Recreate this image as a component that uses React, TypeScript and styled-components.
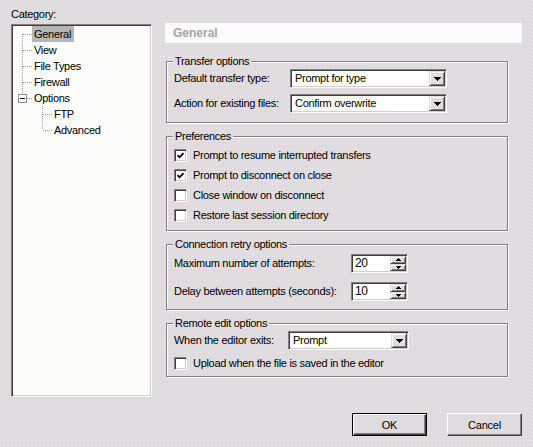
import React from 'react';
import styled, { createGlobalStyle, css } from 'styled-components';

const FACE = '#dfdbdf';
const DOT = '#ebe8eb';

const pattern = css`
  background-color: ${FACE};
  background-image: conic-gradient(at 1px 1px, transparent 75%, ${DOT} 0);
  background-size: 4px 4px;
  background-attachment: fixed;
`;

const GlobalStyle = createGlobalStyle`
  html, body { margin: 0; padding: 0; }
  body {
    ${pattern}
    font-family: "Liberation Sans", Arial, sans-serif;
    font-size: 11px;
    color: #000;
  }
`;

const sunken = css`
  border: 1px solid;
  border-color: #808080 #ffffff #ffffff #808080;
  box-shadow: inset 1px 1px 0 #404040, inset -1px -1px 0 #d4d0c8;
`;

const raised = css`
  border: 1px solid;
  border-color: ${FACE} #404040 #404040 ${FACE};
  box-shadow: inset 1px 1px 0 #ffffff, inset -1px -1px 0 #808080;
  background: ${FACE};
`;

const Dialog = styled.div`
  width: 533px;
  height: 447px;
  box-sizing: border-box;
  padding: 8px 11px 0 11px;
  display: grid;
  grid-template-columns: 141px 1fr;
  grid-template-rows: 389px auto;
  column-gap: 13px;
  letter-spacing: -0.3px;
`;

const LeftColumn = styled.div`
  display: flex;
  flex-direction: column;
  gap: 3px;
`;

const CategoryLabel = styled.div`
  line-height: 13px;
`;

const TreeBox = styled.div`
  ${sunken}
  flex: 1;
  background: #fcfcfa;
  padding: 1px 0 0 1px;
`;

const TreeRow = styled.div`
  display: flex;
  align-items: center;
  height: 16px;
`;

const TreeIndent = styled.span`
  width: 20px;
  flex: none;
`;

const TreeLabel = styled.span<{ $selected?: boolean }>`
  height: 16px;
  line-height: 16px;
  padding: 0 3px 0 2px;
  background: ${(p) => (p.$selected ? '#b6b6b6' : 'transparent')};
`;

type GuideKind = 'first' | 'middle' | 'last';

const TreeGuide: React.FC<{ kind: GuideKind; box?: boolean }> = ({ kind, box }) => {
  const y1 = kind === 'first' ? 8 : 0;
  const y2 = kind === 'last' ? 8 : 16;
  return (
    <svg width="19" height="16" viewBox="0 0 19 16" shapeRendering="crispEdges" style={{ flex: 'none' }}>
      {box ? (
        <>
          <line x1="9.5" y1="0" x2="9.5" y2="4" stroke="#a0a0a0" strokeDasharray="1 1" />
          <line x1="14" y1="8.5" x2="19" y2="8.5" stroke="#a0a0a0" strokeDasharray="1 1" />
          <rect x="5.5" y="4.5" width="8" height="8" fill="#fff" stroke="#909090" />
          <line x1="7" y1="8.5" x2="12" y2="8.5" stroke="#000" />
        </>
      ) : (
        <>
          <line x1="9.5" y1={y1} x2="9.5" y2={y2} stroke="#a0a0a0" strokeDasharray="1 1" />
          <line x1="10" y1="8.5" x2="19" y2="8.5" stroke="#a0a0a0" strokeDasharray="1 1" />
        </>
      )}
    </svg>
  );
};

const RightColumn = styled.div`
  margin-top: 15px;
  display: flex;
  flex-direction: column;
`;

const PageHeader = styled.div`
  height: 20px;
  line-height: 20px;
  background: #fbfbfb;
  color: #a6a6a6;
  font-weight: bold;
  font-size: 12px;
  letter-spacing: 0;
  padding-left: 8px;
  margin-bottom: 12px;
`;

const Group = styled.fieldset<{ $pad: string }>`
  margin: 0 14px 7px 1px;
  min-inline-size: 0;
  border: 1px solid #808080;
  box-shadow: inset 1px 1px 0 #fff, 1px 1px 0 #fff;
  padding: ${(p) => p.$pad};
`;

const GroupTitle = styled.legend`
  ${pattern}
  line-height: 13px;
  padding: 0 2px 0 2px;
  margin-left: -1px;
`;

const FormGrid = styled.div<{ $label: number; $gap: number }>`
  display: grid;
  grid-template-columns: ${(p) => p.$label}px auto;
  justify-content: start;
  align-items: center;
  row-gap: ${(p) => p.$gap}px;
`;

const FieldLabel = styled.span`
  line-height: 13px;
  white-space: nowrap;
`;

const SelectBox = styled.div<{ $width: number }>`
  ${sunken}
  width: ${(p) => p.$width}px;
  height: 19px;
  box-sizing: border-box;
  background: #fff;
  padding: 1px;
  display: flex;
`;

const SelectValue = styled.span`
  flex: 1;
  line-height: 15px;
  padding-left: 3px;
  white-space: nowrap;
`;

const ArrowButton = styled.span`
  ${raised}
  width: 16px;
  box-sizing: border-box;
  display: flex;
  align-items: center;
  justify-content: center;
`;

const Select: React.FC<{ value: string; width: number }> = ({ value, width }) => (
  <SelectBox $width={width}>
    <SelectValue>{value}</SelectValue>
    <ArrowButton>
      <svg width="7" height="4" viewBox="0 0 7 4" shapeRendering="crispEdges">
        <path d="M0 0H7L3.5 4Z" fill="#000" />
      </svg>
    </ArrowButton>
  </SelectBox>
);

const SpinBox = styled.div`
  ${sunken}
  width: 57px;
  height: 19px;
  box-sizing: border-box;
  background: #fff;
  padding: 1px;
  display: flex;
`;

const SpinValue = styled.span`
  flex: 1;
  line-height: 15px;
  padding-left: 2px;
  font-size: 12px;
`;

const SpinButtons = styled.span`
  width: 16px;
  display: flex;
  flex-direction: column;
`;

const SpinButton = styled.span`
  ${raised}
  flex: 1;
  box-sizing: border-box;
  display: flex;
  align-items: center;
  justify-content: center;
`;

const Spinner: React.FC<{ value: string }> = ({ value }) => (
  <SpinBox>
    <SpinValue>{value}</SpinValue>
    <SpinButtons>
      <SpinButton>
        <svg width="5" height="3" viewBox="0 0 5 3" shapeRendering="crispEdges">
          <path d="M2.5 0L5 3H0Z" fill="#000" />
        </svg>
      </SpinButton>
      <SpinButton>
        <svg width="5" height="3" viewBox="0 0 5 3" shapeRendering="crispEdges">
          <path d="M0 0H5L2.5 3Z" fill="#000" />
        </svg>
      </SpinButton>
    </SpinButtons>
  </SpinBox>
);

const CheckRow = styled.label`
  display: flex;
  align-items: center;
  gap: 6px;
  height: 20px;
`;

const CheckBoxFrame = styled.span`
  ${sunken}
  width: 13px;
  height: 13px;
  box-sizing: border-box;
  background: #fff;
  display: flex;
  align-items: center;
  justify-content: center;
`;

const Check: React.FC<{ checked?: boolean; label: string }> = ({ checked, label }) => (
  <CheckRow>
    <CheckBoxFrame>
      {checked && (
        <svg width="7" height="7" viewBox="0 0 7 7">
          <path d="M0.5 3.2L2.6 5.3L6.5 1.2" fill="none" stroke="#000" strokeWidth="1.8" />
        </svg>
      )}
    </CheckBoxFrame>
    <span>{label}</span>
  </CheckRow>
);

const ButtonRow = styled.div`
  grid-column: 1 / -1;
  display: flex;
  justify-content: flex-end;
  gap: 20px;
  padding-top: 16px;
`;

const PushButton = styled.button<{ $default?: boolean }>`
  width: 75px;
  height: 23px;
  box-sizing: border-box;
  background: ${FACE};
  font-family: "Liberation Sans", Arial, sans-serif;
  font-size: 11px;
  letter-spacing: -0.2px;
  color: #000;
  padding: 0;
  ${(p) =>
    p.$default
      ? css`
          border: 1px solid #000;
          box-shadow: inset 1px 1px 0 #fff, inset -1px -1px 0 #404040, inset -2px -2px 0 #808080;
        `
      : css`
          border: 1px solid;
          border-color: #fff #404040 #404040 #fff;
          box-shadow: inset -1px -1px 0 #808080;
        `}
`;

export default function App() {
  return (
    <>
      <GlobalStyle />
      <Dialog>
        <LeftColumn>
          <CategoryLabel>Category:</CategoryLabel>
          <TreeBox>
            <TreeRow>
              <TreeGuide kind="first" />
              <TreeLabel $selected>General</TreeLabel>
            </TreeRow>
            <TreeRow>
              <TreeGuide kind="middle" />
              <TreeLabel>View</TreeLabel>
            </TreeRow>
            <TreeRow>
              <TreeGuide kind="middle" />
              <TreeLabel>File Types</TreeLabel>
            </TreeRow>
            <TreeRow>
              <TreeGuide kind="middle" />
              <TreeLabel>Firewall</TreeLabel>
            </TreeRow>
            <TreeRow>
              <TreeGuide kind="last" box />
              <TreeLabel>Options</TreeLabel>
            </TreeRow>
            <TreeRow>
              <TreeIndent />
              <TreeGuide kind="middle" />
              <TreeLabel>FTP</TreeLabel>
            </TreeRow>
            <TreeRow>
              <TreeIndent />
              <TreeGuide kind="last" />
              <TreeLabel>Advanced</TreeLabel>
            </TreeRow>
          </TreeBox>
        </LeftColumn>

        <RightColumn>
          <PageHeader>General</PageHeader>

          <Group $pad="1px 7px 9px 7px">
            <GroupTitle>Transfer options</GroupTitle>
            <FormGrid $label={116} $gap={6}>
              <FieldLabel>Default transfer type:</FieldLabel>
              <Select value="Prompt for type" width={157} />
              <FieldLabel>Action for existing files:</FieldLabel>
              <Select value="Confirm overwrite" width={157} />
            </FormGrid>
          </Group>

          <Group $pad="2px 7px 5px 7px">
            <GroupTitle>Preferences</GroupTitle>
            <Check checked label="Prompt to resume interrupted transfers" />
            <Check checked label="Prompt to disconnect on close" />
            <Check label="Close window on disconnect" />
            <Check label="Restore last session directory" />
          </Group>

          <Group $pad="3px 7px 8px 7px">
            <GroupTitle>Connection retry options</GroupTitle>
            <FormGrid $label={177} $gap={9}>
              <FieldLabel>Maximum number of attempts:</FieldLabel>
              <Spinner value="20" />
              <FieldLabel>Delay between attempts (seconds):</FieldLabel>
              <Spinner value="10" />
            </FormGrid>
          </Group>

          <Group $pad="1px 7px 3px 7px">
            <GroupTitle>Remote edit options</GroupTitle>
            <FormGrid $label={114} $gap={0}>
              <FieldLabel>When the editor exits:</FieldLabel>
              <Select value="Prompt" width={121} />
            </FormGrid>
            <div style={{ height: 3 }} />
            <Check label="Upload when the file is saved in the editor" />
          </Group>
        </RightColumn>

        <ButtonRow>
          <PushButton $default>OK</PushButton>
          <PushButton>Cancel</PushButton>
        </ButtonRow>
      </Dialog>
    </>
  );
}
